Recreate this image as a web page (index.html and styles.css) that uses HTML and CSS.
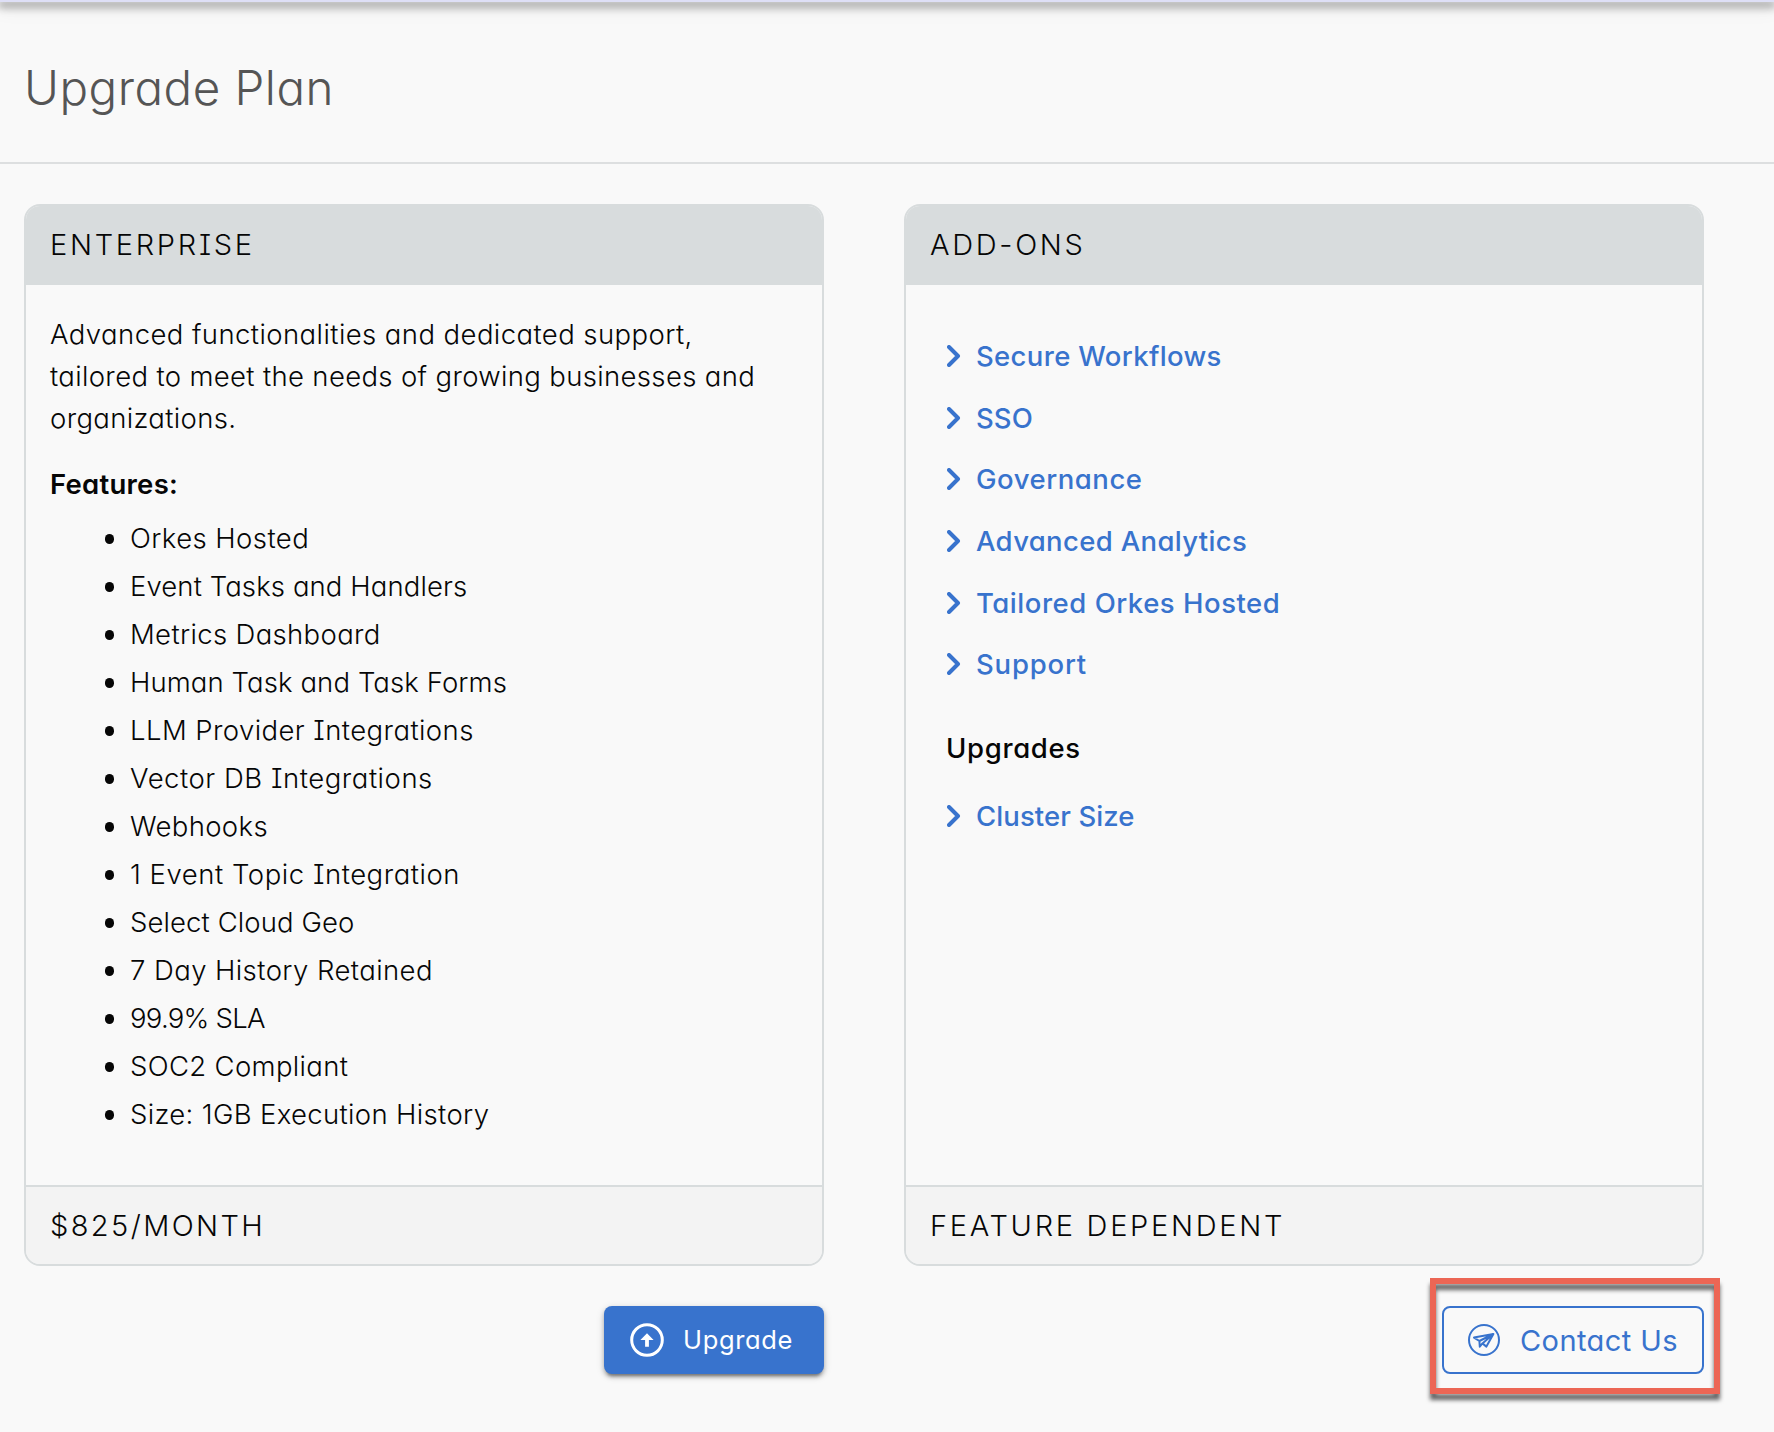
FILE: index.html
```html
<!DOCTYPE html>
<html lang="en">
<head>
<meta charset="utf-8">
<title>Upgrade Plan</title>
<link rel="stylesheet" href="styles.css">
</head>
<body>
<div class="topbar"></div>
<header class="page-header"><h1>Upgrade Plan</h1></header>
<main class="plans">
  <section class="plan">
    <article class="card">
      <h2 class="card-head">ENTERPRISE</h2>
      <div class="card-body">
        <p class="summary">Advanced functionalities and dedicated support,<br><span class="ls-m">tailored to meet the needs of growing businesses and</span><br><span class="ls-m">organizations.</span></p>
        <h3 class="features-title">Features:</h3>
        <ul class="features">
          <li>Orkes Hosted</li>
          <li class="ls-s">Event Tasks and Handlers</li>
          <li class="ls-m">Metrics Dashboard</li>
          <li class="ls-s">Human Task and Task Forms</li>
          <li>LLM Provider Integrations</li>
          <li class="ls-l">Vector DB Integrations</li>
          <li class="ls-m">Webhooks</li>
          <li class="ls-l">1 Event Topic Integration</li>
          <li class="ls-s">Select Cloud Geo</li>
          <li>7 Day History Retained</li>
          <li class="ls-tight">99.9% SLA</li>
          <li class="ls-m">SOC2 Compliant</li>
          <li class="ls-m">Size: 1GB Execution History</li>
        </ul>
      </div>
      <div class="card-foot price">$825/MONTH</div>
    </article>
    <div class="actions">
      <button class="btn btn-primary" type="button">
        <svg class="btn-icon" viewBox="0 0 34 34" width="34" height="34"><circle cx="17" cy="17" r="15.3" fill="none" stroke="currentColor" stroke-width="3"/><path d="M17 10.2 23.6 17h-4.7v6.7h-3.8V17h-4.7z" fill="currentColor"/></svg>
        <span>Upgrade</span>
      </button>
    </div>
  </section>
  <section class="plan">
    <article class="card">
      <h2 class="card-head">ADD-ONS</h2>
      <div class="card-body addons">
        <ul class="links">
          <li><a class="link" href="#"><svg class="chevron" viewBox="0 0 14 22" width="14" height="22"><path d="M2 2l9 9-9 9"/></svg><span class="ls-m">Secure Workflows</span></a></li>
          <li><a class="link" href="#"><svg class="chevron" viewBox="0 0 14 22" width="14" height="22"><path d="M2 2l9 9-9 9"/></svg><span class="ls-s">SSO</span></a></li>
          <li><a class="link" href="#"><svg class="chevron" viewBox="0 0 14 22" width="14" height="22"><path d="M2 2l9 9-9 9"/></svg><span class="ls-l">Governance</span></a></li>
          <li><a class="link" href="#"><svg class="chevron" viewBox="0 0 14 22" width="14" height="22"><path d="M2 2l9 9-9 9"/></svg><span class="ls-m">Advanced Analytics</span></a></li>
          <li><a class="link" href="#"><svg class="chevron" viewBox="0 0 14 22" width="14" height="22"><path d="M2 2l9 9-9 9"/></svg><span class="ls-l">Tailored Orkes Hosted</span></a></li>
          <li><a class="link" href="#"><svg class="chevron" viewBox="0 0 14 22" width="14" height="22"><path d="M2 2l9 9-9 9"/></svg><span class="ls-xl">Support</span></a></li>
        </ul>
        <h3 class="upgrades-title">Upgrades</h3>
        <ul class="links">
          <li><a class="link" href="#"><svg class="chevron" viewBox="0 0 14 22" width="14" height="22"><path d="M2 2l9 9-9 9"/></svg><span class="ls-s">Cluster Size</span></a></li>
        </ul>
      </div>
      <div class="card-foot">FEATURE DEPENDENT</div>
    </article>
    <div class="actions">
      <button class="btn btn-outline" type="button">
        <svg class="btn-icon" viewBox="0 0 32 32" width="32" height="32" fill="none" stroke="currentColor" stroke-width="2" stroke-linejoin="round"><circle cx="16" cy="16" r="15"/><path d="M6 13.6 25.4 10 18.4 22.6 14.4 19.4 11.8 22.6 11.4 17z M25.4 10 11.4 17 M25.4 10 14.4 19.4 11.8 22.6"/></svg>
        <span>Contact Us</span>
      </button>
      <div class="highlight"></div>
    </div>
  </section>
</main>
</body>
</html>
```
FILE: styles.css
```css
* { box-sizing: border-box; }

body {
  margin: 0;
  min-height: 1432px;
  background: #f9f9f9;
  color: #060606;
  font-family: Inter, "Open Sans", sans-serif;
  font-size: 27.5px;
  font-weight: 340;
  line-height: 42px;
  letter-spacing: 0.42px;
  font-feature-settings: "cv11", "cv08";
}

h1, h2, h3, p, ul { margin: 0; padding: 0; }

.topbar {
  height: 2px;
  background: #dedff6;
  box-shadow: 0 3px 8px 2px rgba(0, 0, 0, 0.4), 0 6px 16px rgba(0, 0, 0, 0.25);
}

.page-header {
  height: 162px;
  padding: 55px 24px 0;
  border-bottom: 2px solid #dddfe0;
}

.page-header h1 {
  font-size: 47.5px;
  font-weight: 350;
  line-height: 61px;
  letter-spacing: 0.5px;
  color: #555;
}

.plans {
  display: flex;
  gap: 80px;
  padding: 40px 24px 0;
}

.plan { width: 800px; }

.card {
  display: flex;
  flex-direction: column;
  height: 1062px;
  overflow: hidden;
  border: 2px solid #d8dcdd;
  border-radius: 16px;
}

.card-head, .card-foot {
  padding: 0 24px;
  font-size: 29px;
  font-weight: 340;
  letter-spacing: 2.7px;
}

.card-head {
  height: 79px;
  line-height: 77px;
  background: #d8dcdd;
}

.card-foot {
  height: 79px;
  line-height: 77px;
  border-top: 2px solid #d8dcdd;
  background: #f3f3f3;
}

.price { letter-spacing: 2.4px; }

.card-body {
  flex: 1;
  padding: 28px 24px 0;
}

.features-title {
  margin-top: 24px;
  font-size: inherit;
  font-weight: 600;
  letter-spacing: 0.26px;
}

.features {
  margin-top: 9px;
  list-style: none;
}

.features li {
  display: flex;
  align-items: center;
  gap: 16px;
  padding-left: 54.5px;
  line-height: 48px;
}

.features li::before {
  content: "";
  width: 9.5px;
  height: 9.5px;
  margin-top: 2px;
  border-radius: 50%;
  background: #060606;
}

.addons { padding: 40px 41px 0; }

.links { list-style: none; }

.link {
  display: flex;
  align-items: center;
  gap: 15px;
  height: 61.7px;
  color: #3873cd;
  font-weight: 540;
  text-decoration: none;
}

.chevron {
  fill: none;
  stroke: currentColor;
  stroke-width: 4;
  stroke-linecap: round;
  stroke-linejoin: round;
}

.upgrades-title {
  margin: 32px 0 16px -1px;
  font-size: inherit;
  font-weight: 540;
  letter-spacing: 0.66px;
}

.ls-tight { letter-spacing: -0.75px; }
.ls-s { letter-spacing: 0.1px; }
.ls-m { letter-spacing: 0.34px; }
.ls-l { letter-spacing: 0.53px; }
.ls-xl { letter-spacing: 0.8px; }

.actions {
  position: relative;
  display: flex;
  justify-content: flex-end;
  margin-top: 40px;
}

.btn {
  display: flex;
  align-items: center;
  height: 68px;
  border: 0;
  border-radius: 8px;
  font: inherit;
  font-feature-settings: inherit;
  font-weight: 420;
  white-space: nowrap;
}

.btn-primary {
  width: 220px;
  gap: 19px;
  padding: 0 26px;
  background: #3873cd;
  color: #fff;
  font-size: 25.5px;
  letter-spacing: 0.65px;
  box-shadow: 0 5px 3px -3px rgba(0, 0, 0, 0.3), 0 3px 4px rgba(0, 0, 0, 0.25), 0 2px 9px rgba(0, 0, 0, 0.14);
}

.btn-outline {
  width: 262px;
  gap: 20px;
  padding: 0 0 0 24px;
  border: 2px solid #3873cd;
  background: transparent;
  color: #3873cd;
  font-size: 29px;
  letter-spacing: 0.42px;
}

.btn-outline span { padding-top: 2px; }

.btn-icon { flex: none; }

.highlight {
  position: absolute;
  top: -28px;
  right: -16px;
  width: 290px;
  height: 116px;
  border: 6px solid #ec6655;
  filter: drop-shadow(0 6px 2px rgba(0, 0, 0, 0.6));
  pointer-events: none;
}
```
